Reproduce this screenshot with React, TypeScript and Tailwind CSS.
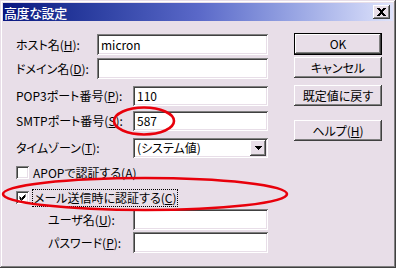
import React from "react";

const sunken =
  "bg-white shadow-[inset_1px_1px_#808080,inset_-1px_-1px_#ffffff,inset_2px_2px_#404040,inset_-2px_-2px_#e8dee8]";
const raised =
  "bg-[#e8dee8] shadow-[inset_-1px_-1px_#404040,inset_1px_1px_#ffffff,inset_-2px_-2px_#808080,inset_2px_2px_#e8dee8]";

function U({ c }: { c: string }) {
  return <span className="underline underline-offset-[1px]">{c}</span>;
}

function Label({ children, w }: { children: React.ReactNode; w: string }) {
  return <div className={`${w} shrink-0 whitespace-nowrap leading-none`}>{children}</div>;
}

function Edit({ value, w, h }: { value?: string; w: string; h: string }) {
  return (
    <div className={`${sunken} ${w} ${h} flex items-center pl-[4px] leading-none`}>
      {value}
    </div>
  );
}

function Button({ children, h, def, mt }: { children: React.ReactNode; h: string; def?: boolean; mt: string }) {
  if (def) {
    return (
      <div className={`${mt} w-[88px] ${h} border border-black`}>
        <div className={`${raised} w-full h-full flex items-center justify-center leading-none`}>{children}</div>
      </div>
    );
  }
  return (
    <div className={`${mt} w-[88px] ${h} ${raised} flex items-center justify-center leading-none`}>{children}</div>
  );
}

function Check({ checked }: { checked?: boolean }) {
  return (
    <div className={`${sunken} w-[13px] h-[13px] shrink-0 flex items-center justify-center`}>
      {checked && (
        <svg width="7" height="7" viewBox="0 0 7 7">
          <path d="M0.5 2.5 L2.5 4.5 L6.5 0.5 M0.5 3.5 L2.5 5.5 L6.5 1.5 M0.5 4.5 L2.5 6.5 L6.5 2.5" stroke="#000" strokeWidth="1" fill="none" />
        </svg>
      )}
    </div>
  );
}

export default function App() {
  return (
    <div className="relative w-[396px] h-[268px] overflow-hidden bg-[#e8dee8] text-[12px] text-black font-['Noto_Sans_CJK_JP',sans-serif] [font-feature-settings:'palt'] p-[3px] flex flex-col shadow-[inset_-1px_-1px_#404040,inset_1px_1px_#e8dee8,inset_-2px_-2px_#808080,inset_2px_2px_#ffffff]">
      {/* Title bar */}
      <div className="h-[18px] shrink-0 flex items-center justify-between bg-gradient-to-r from-[#0a1680] via-[#5a68c8] to-[#dfe3fb] pl-[1px] pr-[3px]">
        <div className="text-white text-[13px] leading-none tracking-[-0.4px] font-medium">高度な設定</div>
        <div className={`${raised} w-[17px] h-[14px] flex items-center justify-center`}>
          <svg width="9" height="8" viewBox="0 0 9 8" shapeRendering="crispEdges">
            <path d="M0 0h3v1h-3z M6 0h3v1h-3z M1 1h3v1h-3z M5 1h3v1h-3z M2 2h5v1h-5z M3 3h3v1h-3z M3 4h3v1h-3z M2 5h5v1h-5z M1 6h3v1h-3z M5 6h3v1h-3z M0 7h3v1h-3z M6 7h3v1h-3z" fill="#000" />
          </svg>
        </div>
      </div>

      {/* Body */}
      <div className="flex flex-row pl-[13px]">
        {/* Left form */}
        <div className="w-[252px] flex flex-col">
          <div className="mt-[13px] flex items-center h-[21px]">
            <Label w="w-[81px]">
              ホスト名(<U c="H" />):
            </Label>
            <Edit value="micron" w="w-[171px]" h="h-[21px]" />
          </div>
          <div className="mt-[3px] flex items-center h-[21px]">
            <Label w="w-[81px]">
              ドメイン名(<U c="D" />):
            </Label>
            <Edit w="w-[171px]" h="h-[21px]" />
          </div>
          <div className="mt-[7px] flex items-center h-[20px]">
            <Label w="w-[117px]">
              POP3ポート番号(<U c="P" />):
            </Label>
            <Edit value="110" w="w-[135px]" h="h-[20px]" />
          </div>
          <div className="mt-[5px] flex items-center h-[20px]">
            <Label w="w-[117px]">
              SMTPポート番号(<U c="S" />):
            </Label>
            <Edit value="587" w="w-[135px]" h="h-[20px]" />
          </div>
          <div className="mt-[7px] flex items-center h-[20px]">
            <Label w="w-[117px]">
              タイムゾーン(<U c="T" />):
            </Label>
            <div className={`${sunken} w-[135px] h-[20px] flex items-center justify-between pl-[4px] pr-[2px]`}>
              <span className="leading-none">(システム値)</span>
              <div className={`${raised} w-[16px] h-[16px] flex items-center justify-center`}>
                <svg width="7" height="4" viewBox="0 0 7 4" shapeRendering="crispEdges">
                  <path d="M0 0h7v1h-7z M1 1h5v1h-5z M2 2h3v1h-3z M3 3h1v1h-1z" fill="#000" />
                </svg>
              </div>
            </div>
          </div>
          <div className="mt-[8px] flex items-center h-[13px] gap-[4px]">
            <Check />
            <span className="leading-none whitespace-nowrap">APOPで認証する(A)</span>
          </div>
          <div className="mt-[12px] flex items-center h-[13px] gap-[3px]">
            <Check checked />
            <span className="leading-none whitespace-nowrap border border-dotted border-black px-[1px] py-[2px]">
              メール送信時に認証する(<U c="C" />)
            </span>
          </div>
          <div className="mt-[5px] flex items-center h-[21px] pl-[32px]">
            <Label w="w-[85px]">
              ユーザ名(<U c="U" />):
            </Label>
            <Edit w="w-[135px]" h="h-[21px]" />
          </div>
          <div className="mt-[2px] flex items-center h-[21px] pl-[32px]">
            <Label w="w-[85px]">
              パスワード(<U c="P" />):
            </Label>
            <Edit w="w-[135px]" h="h-[21px]" />
          </div>
        </div>

        {/* Right buttons */}
        <div className="ml-[26px] flex flex-col">
          <Button def h="h-[22px]" mt="mt-[12px]">OK</Button>
          <Button h="h-[21px]" mt="mt-[2px]">キャンセル</Button>
          <Button h="h-[21px]" mt="mt-[7px]">既定値に戻す</Button>
          <Button h="h-[21px]" mt="mt-[14px]">
            ヘルプ(<U c="H" />)
          </Button>
        </div>
      </div>

      {/* Red annotation ellipses */}
      <svg className="absolute inset-0 pointer-events-none" width="396" height="268" viewBox="0 0 396 268">
        <ellipse cx="144" cy="121" rx="30" ry="13.5" fill="none" stroke="#e8000b" strokeWidth="2.6" />
        <ellipse cx="145" cy="194" rx="142" ry="16" fill="none" stroke="#e8000b" strokeWidth="2.6" />
      </svg>
    </div>
  );
}
